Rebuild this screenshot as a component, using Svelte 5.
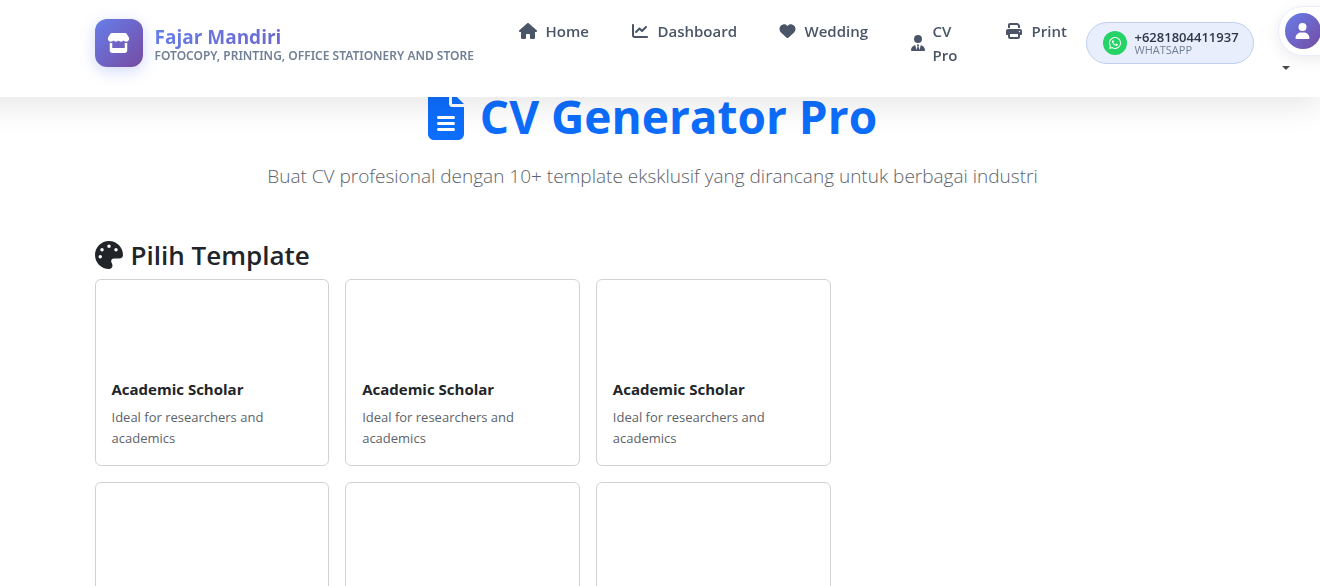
<script>
  const icons = {
    home: { box: '0 0 576 512', d: 'M575.8 255.5c0 18-15 32.1-32 32.1l-32 0 .7 160.2c0 2.7-.2 5.4-.5 8.1l0 16.2c0 22.1-17.9 40-40 40l-16 0c-1.1 0-2.2 0-3.3-.1c-1.4 .1-2.8 .1-4.2 .1L416 512l-24 0c-22.1 0-40-17.9-40-40l0-24 0-64c0-17.7-14.3-32-32-32l-64 0c-17.7 0-32 14.3-32 32l0 64 0 24c0 22.1-17.9 40-40 40l-24 0-31.9 0c-1.5 0-3-.1-4.5-.2c-1.2 .1-2.4 .2-3.6 .2l-16 0c-22.1 0-40-17.9-40-40l0-112c0-.9 0-1.9 .1-2.8l0-69.7-32 0c-18 0-32-14-32-32.1c0-9 3-17 10-24L266.4 8c7-7 15-8 22-8s15 2 21 7L564.8 231.5c8 7 12 15 11 24z' },
    chart: { box: '0 0 512 512', d: 'M64 64c0-17.7-14.3-32-32-32S0 46.3 0 64L0 400c0 44.2 35.8 80 80 80l400 0c17.7 0 32-14.3 32-32s-14.3-32-32-32L80 416c-8.8 0-16-7.2-16-16L64 64zm406.6 86.6c12.5-12.5 12.5-32.8 0-45.3s-32.8-12.5-45.3 0L320 210.7l-57.4-57.4c-12.5-12.5-32.8-12.5-45.3 0l-112 112c-12.5 12.5-12.5 32.8 0 45.3s32.8 12.5 45.3 0L240 221.3l57.4 57.4c12.5 12.5 32.8 12.5 45.3 0l128-128z' },
    heart: { box: '0 0 512 512', d: 'M47.6 300.4L228.3 469.1c7.5 7 17.4 10.9 27.7 10.9s20.2-3.9 27.7-10.9L464.4 300.4c30.4-28.3 47.6-68 47.6-109.5v-5.8c0-69.9-50.5-129.5-119.4-141C347 36.5 300.6 51.4 268 84L256 96 244 84c-32.6-32.6-79-47.5-124.6-39.9C50.5 55.6 0 115.2 0 185.1v5.8c0 41.5 17.2 81.2 47.6 109.5z' },
    tie: { box: '0 0 448 512', d: 'M96 128a128 128 0 1 0 256 0A128 128 0 1 0 96 128zm94.5 200.2l18.6 31L175.8 483.1l-36-146.9c-2-8.1-9.8-13.4-17.9-11.3C51.9 342.4 0 405.8 0 481.3c0 17 13.8 30.7 30.7 30.7H162.5c0 0 0 0 .1 0H168 280h5.5c0 0 0 0 .1 0H417.3c17 0 30.7-13.8 30.7-30.7c0-75.5-51.9-138.9-121.9-156.4c-8.1-2-15.9 3.3-17.9 11.3l-36 146.9L238.9 359.2l18.6-31c6.4-10.7-1.3-24.2-13.7-24.2H224 204.3c-12.4 0-20.1 13.6-13.7 24.2z' },
    print: { box: '0 0 512 512', d: 'M128 0C92.7 0 64 28.7 64 64v96h64V64H354.7L384 93.3V160h64V93.3c0-17-6.7-33.3-18.7-45.3L400 18.7C388 6.7 371.7 0 354.7 0H128zM384 352v32 64H128V384 368 352H384zm64 32h32c17.7 0 32-14.3 32-32V256c0-35.3-28.7-64-64-64H64c-35.3 0-64 28.7-64 64v96c0 17.7 14.3 32 32 32H64v64c0 35.3 28.7 64 64 64H384c35.3 0 64-28.7 64-64V384zM432 248a24 24 0 1 1 0 48 24 24 0 1 1 0-48z' },
    user: { box: '0 0 448 512', d: 'M224 256A128 128 0 1 0 224 0a128 128 0 1 0 0 256zm-45.7 48C79.8 304 0 383.8 0 482.3C0 498.7 13.3 512 29.7 512H418.3c16.4 0 29.7-13.3 29.7-29.7C448 383.8 368.2 304 269.7 304H178.3z' },
    store: { box: '0 0 576 512', d: 'M547.6 103.8L490.3 13.1C485.2 5 476.1 0 466.4 0H109.6C99.9 0 90.8 5 85.7 13.1L28.3 103.8c-29.6 46.8-3.4 111.9 51.9 119.4c4 .5 8.1 .8 12.1 .8c26.1 0 49.3-11.4 65.2-29c15.9 17.6 39.1 29 65.2 29c26.1 0 49.3-11.4 65.2-29c15.9 17.6 39.1 29 65.2 29c26.2 0 49.3-11.4 65.2-29c16 17.6 39.1 29 65.2 29c4.1 0 8.1-.3 12.1-.8c55.5-7.4 81.8-72.5 52.1-119.4zM499.7 254.9l-.1 0c-5.3 .7-10.7 1.1-16.2 1.1c-12.4 0-24.3-1.9-35.4-5.3V384H128V250.6c-11.2 3.5-23.2 5.4-35.6 5.4c-5.5 0-11-.4-16.3-1.1l-.1 0c-4.1-.6-8.1-1.3-12-2.3V384v64c0 35.3 28.7 64 64 64H448c35.3 0 64-28.7 64-64V384 252.6c-4 1-8 1.8-12.3 2.3z' },
    palette: { box: '0 0 512 512', d: 'M512 256c0 .9 0 1.8 0 2.7c-.4 36.5-33.6 61.3-70.1 61.3H344c-26.5 0-48 21.5-48 48c0 3.4 .4 6.7 1 9.9c2.1 10.2 6.5 20 10.8 29.9c6.1 13.8 12.1 27.5 12.1 42c0 31.8-21.6 60.7-53.4 62c-3.5 .1-7 .2-10.6 .2C114.6 512 0 397.4 0 256S114.6 0 256 0S512 114.6 512 256zM128 288a32 32 0 1 0 -64 0 32 32 0 1 0 64 0zm0-96a32 32 0 1 0 0-64 32 32 0 1 0 0 64zM288 96a32 32 0 1 0 -64 0 32 32 0 1 0 64 0zm96 96a32 32 0 1 0 0-64 32 32 0 1 0 0 64z' },
    file: { box: '0 0 384 512', d: 'M64 0C28.7 0 0 28.7 0 64V448c0 35.3 28.7 64 64 64H320c35.3 0 64-28.7 64-64V160H256c-17.7 0-32-14.3-32-32V0H64zM256 0V128H384L256 0zM112 256H272c8.8 0 16 7.2 16 16s-7.2 16-16 16H112c-8.8 0-16-7.2-16-16s7.2-16 16-16zm0 64H272c8.8 0 16 7.2 16 16s-7.2 16-16 16H112c-8.8 0-16-7.2-16-16s7.2-16 16-16zm0 64H272c8.8 0 16 7.2 16 16s-7.2 16-16 16H112c-8.8 0-16-7.2-16-16s7.2-16 16-16z' },
    whatsapp: { box: '0 0 448 512', d: 'M380.9 97.1C339 55.1 283.2 32 223.9 32c-122.4 0-222 99.6-222 222 0 39.1 10.2 77.3 29.6 111L0 480l117.7-30.9c32.4 17.7 68.9 27 106.1 27h.1c122.3 0 224.1-99.6 224.1-222 0-59.3-25.2-115-67.1-157zm-157 341.6c-33.2 0-65.7-8.9-94-25.7l-6.7-4-69.8 18.3L72 359.2l-4.4-7c-18.5-29.4-28.2-63.3-28.2-98.2 0-101.7 82.8-184.5 184.6-184.5 49.3 0 95.6 19.2 130.4 54.1 34.8 34.9 56.2 81.2 56.1 130.5 0 101.8-84.9 184.6-186.6 184.6zm101.2-138.2c-5.5-2.8-32.8-16.2-37.9-18-5.1-1.9-8.8-2.8-12.5 2.8-3.7 5.6-14.3 18-17.6 21.8-3.2 3.7-6.5 4.2-12 1.4-32.6-16.3-54-29.1-75.5-66-5.7-9.8 5.7-9.1 16.3-30.3 1.8-3.7.9-6.9-.5-9.7-1.4-2.8-12.5-30.1-17.1-41.2-4.5-10.8-9.1-9.3-12.5-9.5-3.2-.2-6.9-.2-10.6-.2-3.7 0-9.7 1.4-14.8 6.9-5.1 5.6-19.4 19-19.4 46.3 0 27.3 19.9 53.7 22.6 57.4 2.8 3.7 39.1 59.7 94.8 83.8 35.2 15.2 49 16.5 66.6 13.9 10.7-1.6 32.8-13.4 37.4-26.4 4.6-13 4.6-24.1 3.2-26.4-1.3-2.5-5-3.9-10.5-6.6z' }
  };

  const links = [
    { label: 'Home', icon: 'home' },
    { label: 'Dashboard', icon: 'chart' },
    { label: 'Wedding', icon: 'heart' },
    { label: 'CV Pro', icon: 'tie' },
    { label: 'Print', icon: 'print' }
  ];

  const templates = Array.from({ length: 6 }, (_, id) => ({
    id,
    name: 'Academic Scholar',
    text: 'Ideal for researchers and academics'
  }));
</script>

{#snippet icon(name)}
  <svg class="icon" viewBox={icons[name].box} aria-hidden="true">
    <path fill="currentColor" fill-rule="evenodd" d={icons[name].d} />
  </svg>
{/snippet}

<div class="page">
  <header>
    <div class="container bar">
      <a class="brand" href="#home">
        <span class="logo">{@render icon('store')}</span>
        <span class="brand-text">
          <strong>Fajar Mandiri</strong>
          <small>FOTOCOPY, PRINTING, OFFICE STATIONERY AND STORE</small>
        </span>
      </a>
      <nav>
        {#each links as link}
          <a href="#{link.icon}" class={link.icon}>{@render icon(link.icon)}<span>{link.label}</span></a>
        {/each}
      </nav>
      <a class="phone" href="#whatsapp">
        <span class="badge">{@render icon('whatsapp')}</span>
        <span class="phone-text">
          <strong>+6281804411937</strong>
          <small>WHATSAPP</small>
        </span>
      </a>
      <button class="account" aria-label="Account">
        <span class="ring"><span class="avatar">{@render icon('user')}</span></span>
        <span class="caret"></span>
      </button>
    </div>
  </header>

  <main class="container">
    <h1>{@render icon('file')}<span>CV Generator Pro</span></h1>
    <p class="lead">Buat CV profesional dengan 10+ template eksklusif yang dirancang untuk berbagai industri</p>
    <section>
      <h2>{@render icon('palette')}<span>Pilih Template</span></h2>
      <div class="grid">
        {#each templates as t (t.id)}
          <article>
            <div class="preview"></div>
            <h3>{t.name}</h3>
            <p>{t.text}</p>
          </article>
        {/each}
      </div>
    </section>
  </main>
</div>

<style>
  :global(body) {
    background: #fff;
    color: #212529;
    font-family: 'Open Sans', 'Noto Sans', sans-serif;
    font-size: 16px;
    line-height: 24px;
    overflow: hidden;
  }
  .page {
    box-sizing: border-box;
    padding-right: 15px;
  }
  .page * {
    box-sizing: border-box;
  }
  a {
    color: inherit;
    text-decoration: none;
  }
  .icon {
    display: block;
    flex: none;
  }
  .container {
    max-width: 1140px;
    margin: 0 auto;
    padding: 0 12px;
  }
  header {
    position: fixed;
    top: 0;
    left: -32px;
    right: 0;
    z-index: 10;
    padding: 0 15px 0 32px;
    background: rgba(255, 255, 255, 0.98);
    backdrop-filter: blur(20px);
    box-shadow: 0 8px 32px rgba(0, 0, 0, 0.1);
  }
  .bar {
    display: flex;
    align-items: flex-start;
    height: 97px;
  }
  .brand {
    display: flex;
    flex: none;
    gap: 12px;
    width: 424px;
    padding-top: 19px;
    white-space: nowrap;
  }
  .logo {
    display: flex;
    align-items: center;
    justify-content: center;
    width: 48px;
    height: 48px;
    border-radius: 12px;
    background: linear-gradient(135deg, #667eea, #764ba2);
    box-shadow: 0 4px 15px rgba(102, 126, 234, 0.3);
    color: #fff;
  }
  .logo .icon {
    width: 23px;
    height: 20px;
  }
  .brand-text {
    display: flex;
    flex-direction: column;
    padding-top: 6px;
  }
  .brand-text strong {
    align-self: stretch;
    font-size: 19px;
    line-height: 24px;
    background: linear-gradient(135deg, #667eea, #764ba2);
    background-clip: text;
    color: transparent;
  }
  .brand-text small {
    font-family: 'Noto Sans', sans-serif;
    font-size: 12px;
    font-weight: 600;
    line-height: 14px;
    color: #718096;
  }
  nav {
    display: grid;
    grid-template-columns: 112px 148px 132px 94px 81px;
    flex: none;
    align-items: start;
    padding-top: 19px;
  }
  nav a {
    display: flex;
    align-items: center;
    gap: 9px;
    color: #4a5568;
    font-size: 15px;
    font-weight: 600;
  }
  nav .icon {
    width: 18px;
    height: 16px;
  }
  nav .heart .icon {
    width: 17px;
  }
  nav .tie {
    gap: 8px;
    padding-right: 44px;
  }
  nav .tie .icon {
    width: 14px;
  }
  .phone {
    display: flex;
    flex: none;
    align-items: center;
    gap: 8px;
    width: 168px;
    height: 42px;
    margin-top: 22px;
    padding-left: 16px;
    border: 1px solid #bfd0ee;
    border-radius: 21px;
    background: #e8eefc;
  }
  .badge {
    display: flex;
    flex: none;
    align-items: center;
    justify-content: center;
    width: 24px;
    height: 24px;
    border-radius: 50%;
    background: #25d366;
    color: #fff;
  }
  .badge .icon {
    width: 12px;
    height: 14px;
  }
  .phone-text {
    display: flex;
    flex-direction: column;
  }
  .phone-text strong {
    font-size: 13px;
    font-weight: 600;
    line-height: 13px;
    color: #2d3748;
  }
  .phone-text small {
    font-size: 11px;
    line-height: 11px;
    color: #718096;
  }
  .account {
    flex: none;
    margin: 6px 0 0 24px;
    padding: 0;
    border: 0;
    background: none;
    color: #4a4a4a;
    text-align: left;
  }
  .ring {
    display: block;
    width: 86px;
    padding: 6px;
    border: 1px solid #e9edfb;
    border-radius: 25px;
    background: #fff;
    box-shadow: 0 4px 15px rgba(0, 0, 0, 0.08);
  }
  .avatar {
    display: flex;
    align-items: center;
    justify-content: center;
    width: 36px;
    height: 36px;
    border-radius: 50%;
    background: linear-gradient(135deg, #667eea, #764ba2);
    color: #fff;
  }
  .avatar .icon {
    width: 15px;
    height: 16px;
  }
  .caret {
    display: block;
    width: 0;
    margin: 10px 0 0 4px;
    border: 4px solid transparent;
    border-top-color: currentColor;
    border-bottom: 0;
  }
  main.container {
    padding-top: 87px;
  }
  h1,
  h2,
  h3,
  p {
    margin: 0;
  }
  h1 {
    display: flex;
    align-items: center;
    justify-content: center;
    gap: 16px;
    margin-bottom: 16px;
    color: #0d6efd;
    font-size: 46px;
    line-height: 58px;
  }
  h1 .icon {
    width: 36px;
    height: 48px;
  }
  .lead {
    margin-bottom: 47px;
    color: #5c636a;
    font-size: 19px;
    font-weight: 300;
    line-height: 30px;
    text-align: center;
  }
  section {
    max-width: 736px;
  }
  h2 {
    display: flex;
    align-items: center;
    gap: 8px;
    margin-bottom: 7px;
    font-size: 26px;
    font-weight: 600;
    line-height: 34px;
  }
  h2 .icon {
    width: 28px;
    height: 28px;
  }
  .grid {
    display: grid;
    grid-template-columns: repeat(3, 1fr);
    gap: 16px;
  }
  article {
    padding: 16px;
    border: 1px solid #d0d2d4;
    border-radius: 6px;
    background: #fff;
  }
  .preview {
    height: 84px;
  }
  h3 {
    margin-bottom: 8px;
    font-size: 15px;
    line-height: 19px;
  }
  article p {
    color: #5c636a;
    font-size: 13px;
    line-height: 21px;
  }
</style>
